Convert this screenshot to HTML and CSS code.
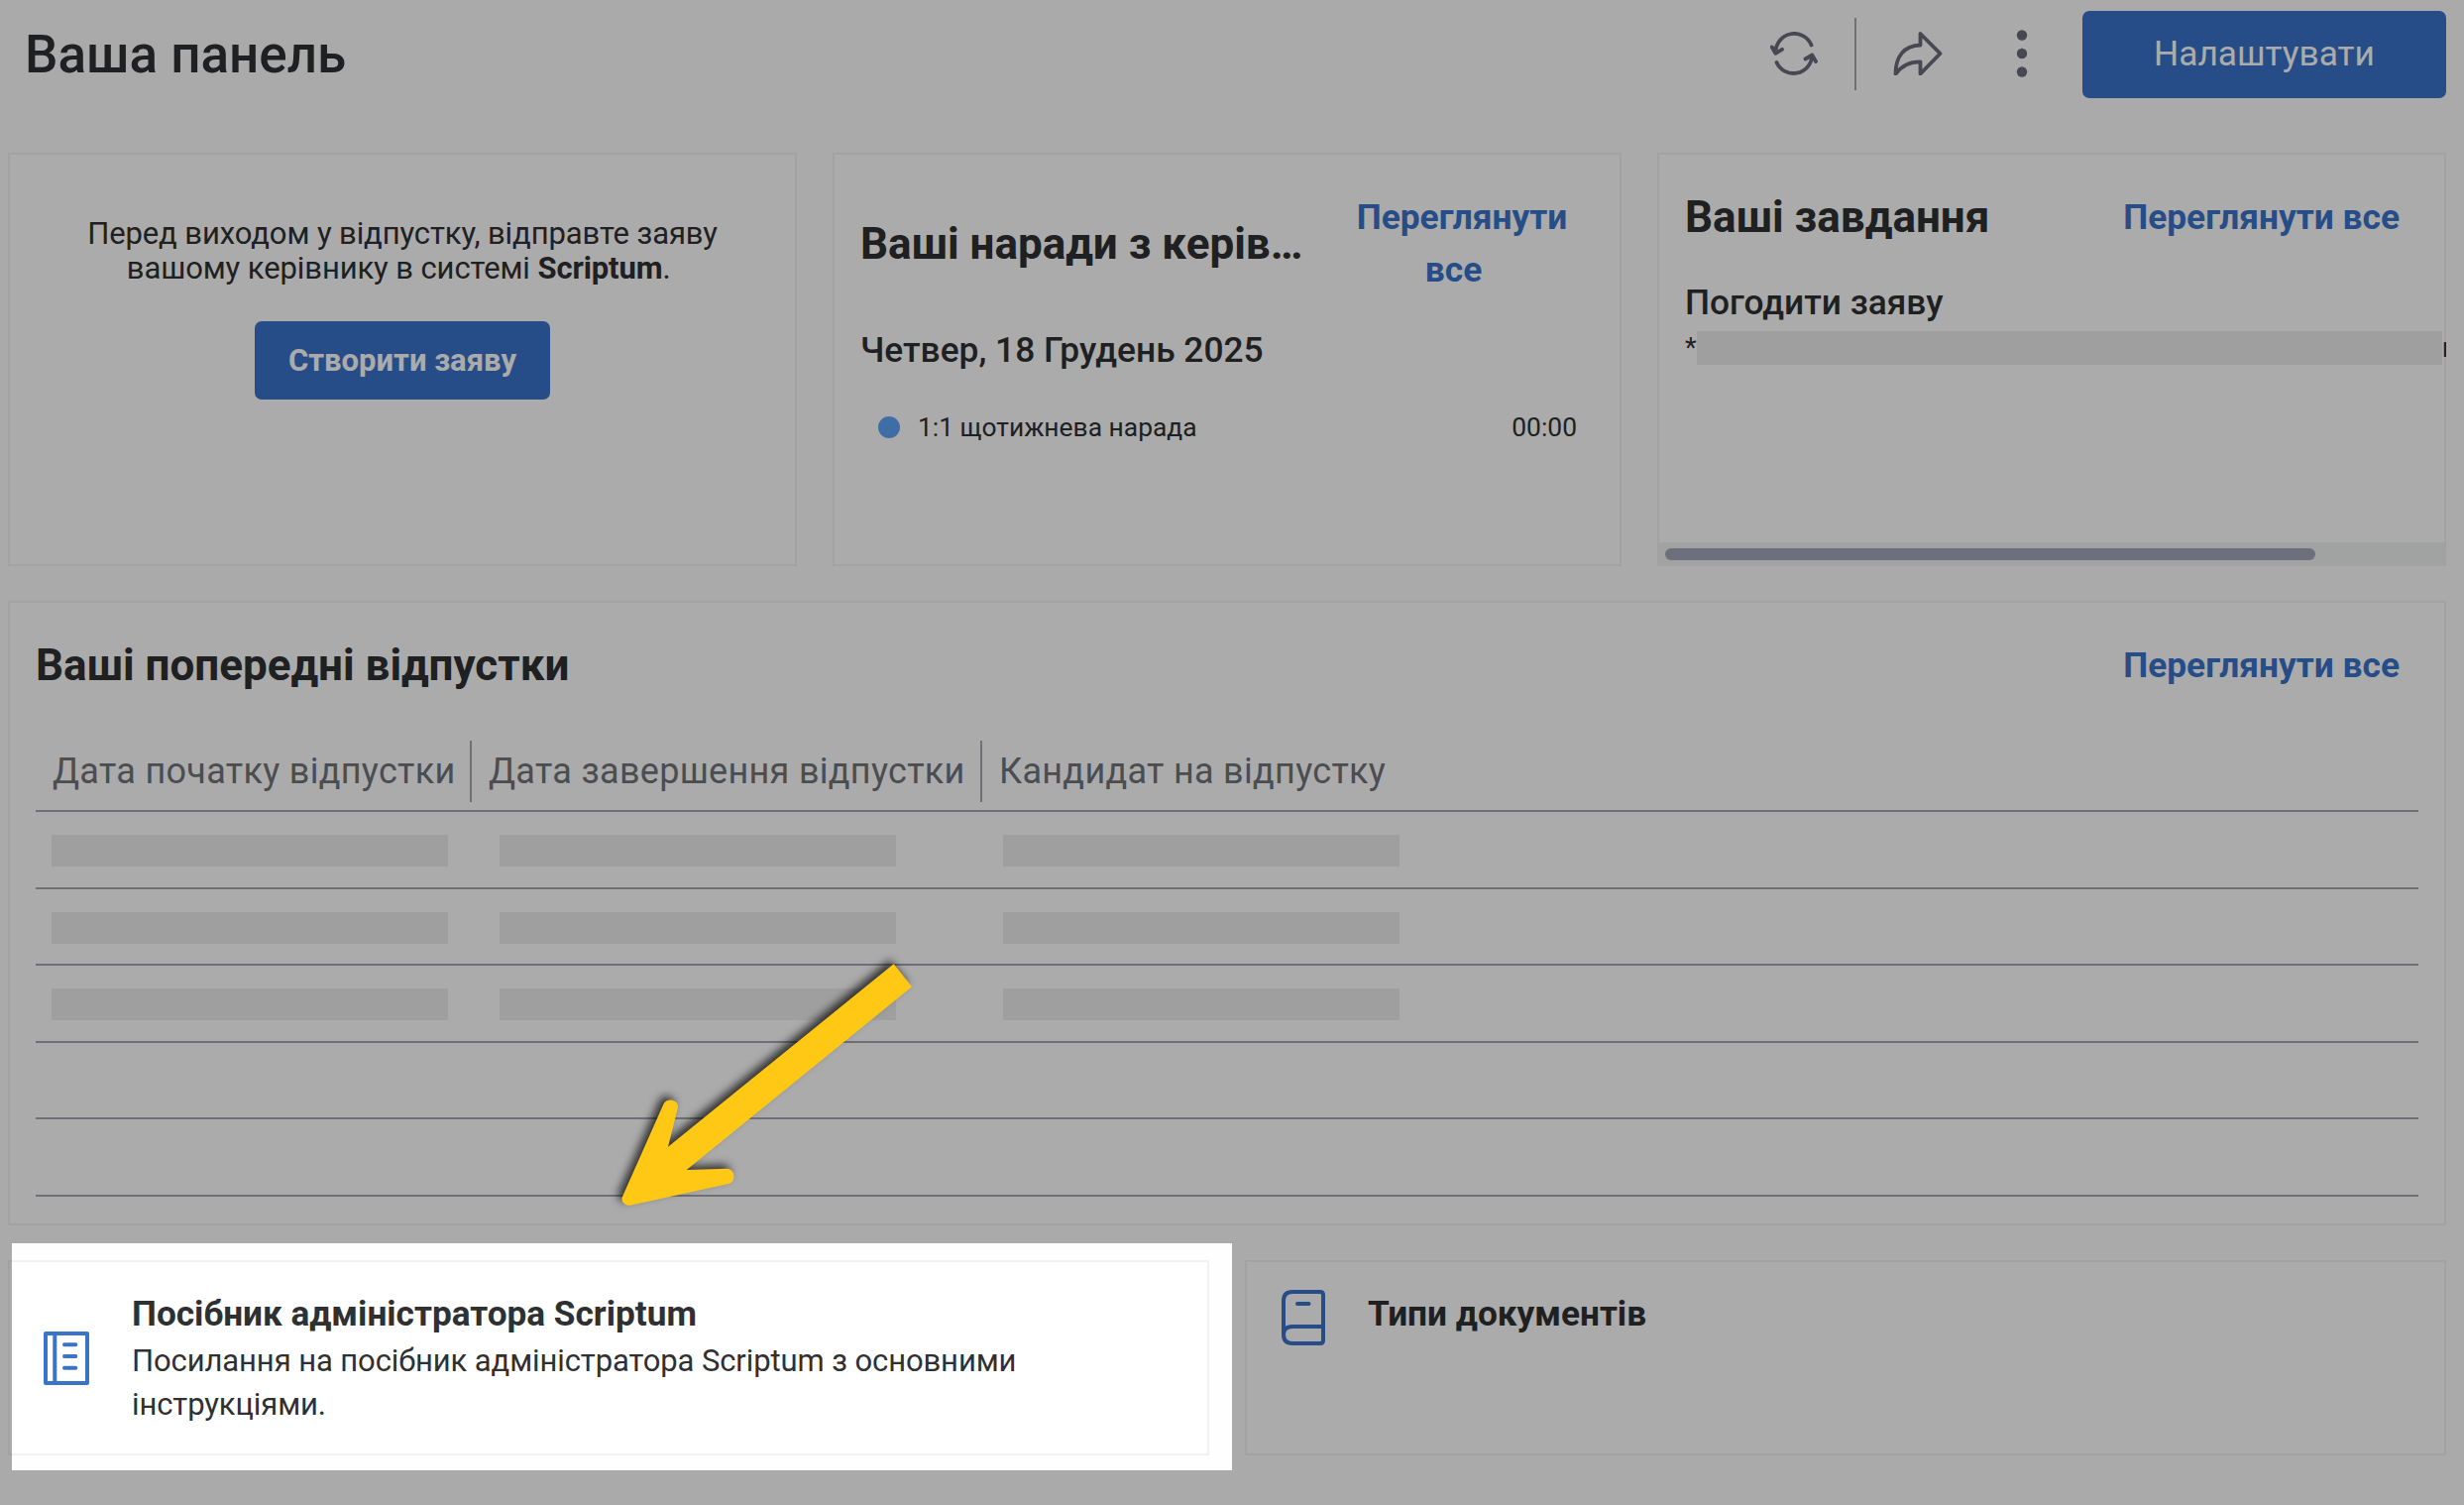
FILE: index.html
```html
<!DOCTYPE html>
<html lang="uk">
<head>
    <meta charset="UTF-8">
    <meta name="viewport" content="width=device-width, initial-scale=1.0">
    <title>Ваша панель</title>
    <link rel="stylesheet" href="styles.css">
</head>
<body>

    <header class="topbar">
        <h1>Ваша панель</h1>
        <div class="actions">
            <svg class="icon-refresh" viewBox="0 0 48 44" width="48" height="44">
                <path d="M5.5 20.5A18.7 18.7 0 0 1 41.5 13.5M1.8 15.5L5.4 21.8L12 17.8M6.5 31A18.7 18.7 0 0 0 42.2 24.5M35.5 27.5L42.3 23.5L46 30"/>
            </svg>
            <span class="divider"></span>
            <svg class="icon-share" viewBox="0 0 50 44" width="50" height="44">
                <path d="M27.5 2L47.5 22L27.5 42.5V30.3C17 30 9 34 2.5 42.5C2.5 25 11 14 27.5 13.5Z"/>
            </svg>
            <svg class="icon-more" viewBox="0 0 12 48" width="12" height="48">
                <circle cx="6" cy="5.5" r="5.2"/>
                <circle cx="6" cy="24" r="5.2"/>
                <circle cx="6" cy="42.5" r="5.2"/>
            </svg>
            <button class="btn-setup">Налаштувати</button>
        </div>
    </header>

    <main class="dashboard">
        <div class="row three">
            <section class="card request">
                <p>Перед виходом у відпустку, відправте заяву<br>вашому керівнику в системі <b>Scriptum</b>.&nbsp;</p>
                <button class="btn-create">Створити заяву</button>
            </section>

            <section class="card meetings">
                <div class="card-head">
                    <h2>Ваші наради з керів…</h2>
                    <a class="link">Переглянути <span>все</span></a>
                </div>
                <h3>Четвер, 18 Грудень 2025</h3>
                <div class="meeting">
                    <span class="dot"></span>
                    <span>1:1 щотижнева нарада</span>
                    <span class="time">00:00</span>
                </div>
            </section>

            <section class="card tasks">
                <div class="card-head">
                    <h2>Ваші завдання</h2>
                    <a class="link">Переглянути все</a>
                </div>
                <h3>Погодити заяву</h3>
                <div class="task-text">*<span class="blank"></span>н</div>
                <div class="scrollbar"><div class="thumb"></div></div>
            </section>
        </div>

        <section class="card vacations">
            <div class="card-head">
                <h2>Ваші попередні відпустки</h2>
                <a class="link">Переглянути все</a>
            </div>
            <div class="table">
                <div class="tr th">
                    <div>Дата початку відпустки</div>
                    <div>Дата завершення відпустки</div>
                    <div>Кандидат на відпустку</div>
                </div>
                <div class="tr"><span class="blank"></span><span class="blank"></span><span class="blank"></span></div>
                <div class="tr"><span class="blank"></span><span class="blank"></span><span class="blank"></span></div>
                <div class="tr"><span class="blank"></span><span class="blank"></span><span class="blank"></span></div>
                <div class="tr"></div>
                <div class="tr"></div>
            </div>
        </section>

        <div class="row two">
            <section class="card guide">
                <svg class="icon-guide" viewBox="0 0 46 54" width="46" height="54">
                    <path d="M2 2H44V52H2ZM11.300 2V52M21 13.300H32.300M21 25H32.300M21 36.700H32.300"/>
                </svg>
                <div class="text">
                    <h4>Посібник адміністратора Scriptum</h4>
                    <p>Посилання на посібник адміністратора Scriptum з основними інструкціями.</p>
                </div>
            </section>

            <section class="card types">
                <svg class="icon-types" viewBox="0 0 44 56" width="44" height="56">
                    <path d="M11 2H39Q42 2 42 5V51Q42 54 39 54H11Q2 54 2 45V11Q2 2 11 2ZM2 45Q2 37 11 37H42M16 14H27.500"/>
                </svg>
                <div class="text">
                    <h4>Типи документів</h4>
                </div>
            </section>
        </div>
    </main>

    <!-- dimmed page with a highlighted block -->
    <div class="spotlight"></div>
    <svg class="arrow" viewBox="0 0 350 290" width="350" height="290">
        <path d="M301.700 22.300L320 45.300L92.700 230L133.300 228.700C142 228.500 143 242 135 244L36 265.700C30 266.500 26 261 28 257L69.500 163.500C72.500 156.500 85 159 84 167L74 206.700Z"/>
    </svg>

</body>
</html>
```

FILE: styles.css
```css
* {
    box-sizing: border-box;
}

body {
    position: relative;
    height: 1518px;
    margin: 0;
    padding: 0 18px 0 8px;
    overflow: hidden;
    background-color: #fefefe;
    font-family: Roboto, sans-serif;
    color: #2f3032;
}

h1, h2, h3, h4, p {
    margin: 0;
}

h2 {
    font-size: 44px;
    font-weight: 700;
    line-height: 54px;
    white-space: nowrap;
}

h3 {
    font-size: 35.3px;
    font-weight: 500;
    line-height: 44px;
}

h4 {
    font-size: 35.2px;
    font-weight: 700;
    line-height: 48px;
}

button {
    border: none;
    border-radius: 7px;
    background-color: #3974c9;
    color: white;
    font-family: inherit;
}

svg {
    flex-shrink: 0;
    fill: none;
    stroke: #3974c9;
    stroke-width: 4;
    stroke-linecap: round;
    stroke-linejoin: round;
}

.topbar {
    display: flex;
    justify-content: space-between;
    align-items: center;
    height: 110px;
    padding-left: 17px;
}

h1 {
    font-size: 53px;
    font-weight: 500;
}

.actions {
    display: flex;
    align-items: center;
}

.actions svg {
    margin-bottom: 3px;
    stroke: #6a6c7a;
    stroke-width: 3.8;
}

.divider {
    width: 2px;
    height: 73px;
    margin: 0 37px 2px;
    background-color: #a6a6aa;
}

.actions .icon-more {
    margin: 0 55px 3px 74px;
    fill: #6a6c7a;
    stroke: none;
}

.btn-setup {
    width: 367px;
    height: 88px;
    padding-bottom: 3px;
    font-size: 35.3px;
}

.dashboard {
    display: flex;
    flex-direction: column;
    gap: 35px;
    padding-top: 44px;
}

.row {
    display: grid;
    gap: 36px;
}

.three {
    grid-template-columns: repeat(3, 1fr);
    height: 417px;
}

.two {
    grid-template-columns: repeat(2, 1fr);
    height: 197px;
}

.card {
    min-width: 0;
    border: 2px solid #f2f2f2;
    background-color: white;
    padding: 0 26px;
}

.card-head {
    display: flex;
    align-items: center;
    justify-content: space-between;
    padding: 36px 19px 0 0;
}

.link {
    padding-top: 1px;
    color: #3974c9;
    font-size: 35.3px;
    font-weight: 700;
    line-height: 53px;
    text-align: center;
}

.blank {
    background-color: #eee;
}

.request {
    display: flex;
    flex-direction: column;
    align-items: center;
    padding-top: 62px;
    font-size: 31px;
    letter-spacing: -0.1px;
    line-height: 35px;
    text-align: center;
}

.btn-create {
    width: 298px;
    height: 79px;
    margin-top: 36px;
    font-size: 31px;
    font-weight: 700;
}

.meetings .card-head {
    padding: 36px 23px 0 0;
}

.meetings .link {
    width: 220px;
}

.meetings .link span {
    margin-right: 17px;
}

.meetings h3 {
    margin-top: 32px;
}

.meeting {
    display: flex;
    align-items: center;
    margin-top: 40px;
    padding: 0 17px 0 18px;
    font-size: 26.4px;
    line-height: 32px;
}

.dot {
    width: 22px;
    height: 22px;
    margin-right: 18px;
    border-radius: 50%;
    background-color: #5fa4f8;
}

.time {
    margin-left: auto;
}

.tasks {
    display: flex;
    flex-direction: column;
}

.tasks h3 {
    margin-top: 37px;
}

.task-text {
    display: flex;
    align-items: center;
    width: 768px;
    margin-top: 7px;
    overflow: hidden;
    font-size: 27px;
    line-height: 34px;
}

.task-text .blank {
    flex-shrink: 0;
    width: 752px;
    height: 34px;
}

.scrollbar {
    height: 24px;
    margin: auto -26px -2px;
    padding: 6px 0 0 6px;
    background-color: #f0f3f4;
}

.thumb {
    width: 656px;
    height: 12px;
    border-radius: 6px;
    background-color: #a2a7ba;
}

.vacations {
    height: 630px;
}

.table {
    width: 2404px;
    margin-top: 49px;
}

.tr {
    display: grid;
    grid-template-columns: 440px 515px 1fr;
    height: 77.6px;
    padding-top: 23px;
    border-bottom: 2px solid #a6a8b0;
}

.tr .blank {
    width: 400px;
    height: 32px;
    margin-left: 16px;
}

.tr .blank:nth-child(2) {
    margin-left: 28px;
}

.tr .blank:nth-child(3) {
    margin-left: 21px;
}

.th {
    height: 72px;
    padding-top: 0;
    color: #707379;
    font-size: 36px;
    letter-spacing: 0.3px;
    line-height: 62px;
}

.th div {
    height: 62px;
    padding-left: 17px;
    border-right: 2px solid #a6a8b0;
    white-space: nowrap;
}

.th div:last-child {
    border-right: none;
}

.guide, .types {
    display: flex;
    padding: 0 34px;
}

.guide {
    align-items: center;
}

.guide .text {
    margin-left: 43px;
}

.guide p {
    margin-top: 2px;
    font-size: 31px;
    letter-spacing: -0.1px;
    line-height: 44px;
}

.types {
    padding: 28px 35px 0;
}

.types .text {
    margin-left: 43px;
}

/* covers the whole page except its own box */
.spotlight {
    position: absolute;
    left: 12px;
    top: 1254px;
    width: 1231px;
    height: 229px;
    box-shadow: 0 0 0 2600px rgba(0, 0, 0, 0.33);
}

.arrow {
    position: absolute;
    left: 600px;
    top: 950px;
    fill: #ffc815;
    stroke: none;
    filter: drop-shadow(-4px -4px 4px rgba(0, 0, 0, 0.7));
}
```
